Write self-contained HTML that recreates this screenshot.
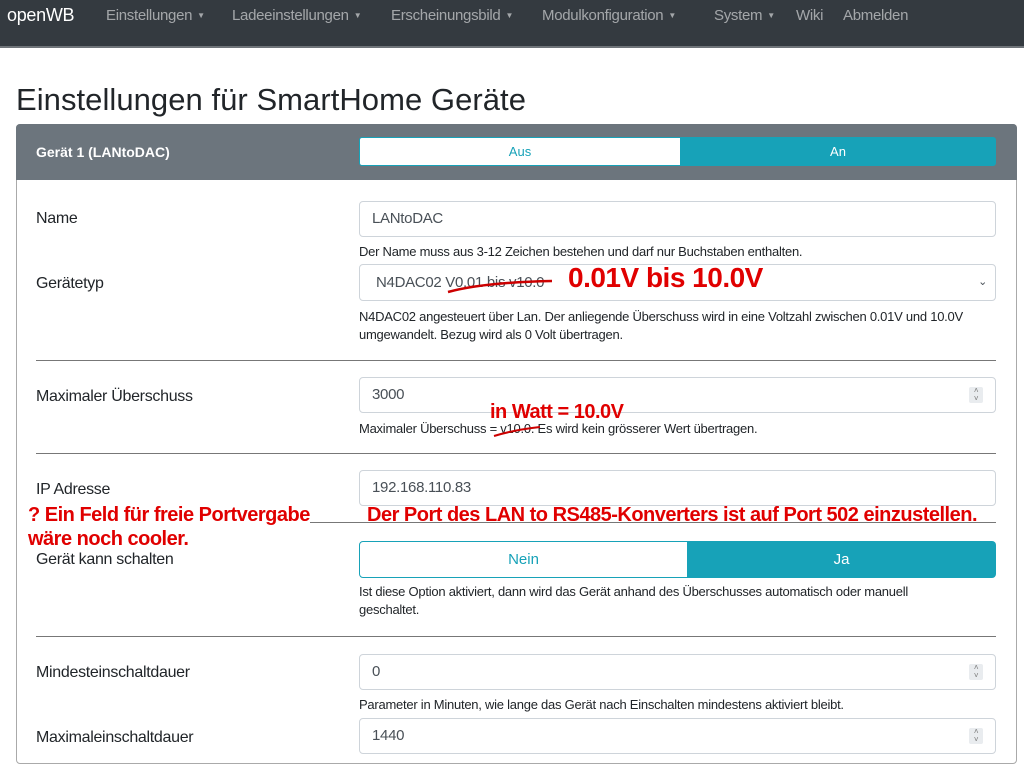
<!DOCTYPE html>
<html><head><meta charset="utf-8"><style>
*{box-sizing:border-box;margin:0;padding:0}
body{width:1024px;height:756px;overflow:hidden;background:#fff;font-family:"Liberation Sans",sans-serif;color:#212529;position:relative}
.a{position:absolute;white-space:nowrap}
.nav{position:absolute;left:0;top:0;width:1024px;height:48px;background:#343a40;border-bottom:2px solid #6f7479}
.nav>span{position:absolute;top:7px;font-size:15px;color:rgba(255,255,255,.55);letter-spacing:-0.3px;white-space:nowrap}
.car{font-size:8px;vertical-align:2px;margin-left:5px}
.inp{position:absolute;left:359px;width:637px;border:1px solid #ced4da;border-radius:4px;background:#fff;font-size:15px;color:#495057;padding-left:12px;letter-spacing:-0.3px}
.lbl{position:absolute;left:36px;font-size:16px;letter-spacing:-0.3px}
.help{position:absolute;left:359px;font-size:13px;color:#212529;letter-spacing:-0.25px;line-height:18px;white-space:nowrap}
.hr{position:absolute;left:36px;width:960px;height:1px;background:#777}
.red{position:absolute;color:#e00000;font-weight:bold;white-space:nowrap;letter-spacing:-0.5px}
.spin{position:absolute;right:12px;top:9px;width:14px;height:16px;background:#e9ecef;border-radius:2px;font-size:8px;color:#777;text-align:center;line-height:8px}
</style></head><body>
<div class="nav">
<span style="left:7px;color:#fff;font-size:18px;top:5px">openWB</span>
<span style="left:106px">Einstellungen<span class="car">▼</span></span>
<span style="left:232px">Ladeeinstellungen<span class="car">▼</span></span>
<span style="left:391px">Erscheinungsbild<span class="car">▼</span></span>
<span style="left:542px">Modulkonfiguration<span class="car">▼</span></span>
<span style="left:714px">System<span class="car">▼</span></span>
<span style="left:796px">Wiki</span>
<span style="left:843px">Abmelden</span>
</div>
<div class="a" style="left:16px;top:82px;font-size:31px;letter-spacing:0.05px">Einstellungen für SmartHome Geräte</div>
<div class="a" style="left:16px;top:124px;width:1001px;height:640px;border:1px solid #aaa;border-radius:4px"></div>
<div class="a" style="left:16px;top:124px;width:1001px;height:56px;background:#6c757d;border-radius:4px 4px 0 0"></div>
<div class="a" style="left:36px;top:144px;color:#fff;font-weight:bold;font-size:14px">Gerät 1 (LANtoDAC)</div>
<div class="a" style="left:359px;top:137px;width:322px;height:29px;background:#fff;border:1px solid #17a2b8;border-radius:3px 0 0 3px;color:#17a2b8;font-size:13px;text-align:center;line-height:27px">Aus</div>
<div class="a" style="left:680px;top:137px;width:316px;height:29px;background:#17a2b8;border-radius:0 3px 3px 0;color:#fff;font-size:13px;text-align:center;line-height:29px">An</div>

<div class="lbl" style="top:210px">Name</div>
<div class="inp" style="top:201px;height:36px;line-height:34px">LANtoDAC</div>
<div class="help" style="top:243px">Der Name muss aus 3-12 Zeichen bestehen und darf nur Buchstaben enthalten.</div>

<div class="lbl" style="top:275px">Gerätetyp</div>
<div class="inp" style="top:264px;height:37px;line-height:35px;padding-left:16px">N4DAC02 V0.01 bis v10.0<span style="position:absolute;right:8px;font-size:11px">⌄</span></div>
<svg class="a" style="left:440px;top:272px" width="120" height="26"><path d="M8 20 C30 14,60 10,112 9" stroke="#c00" stroke-width="2.5" fill="none"/></svg>
<div class="red" style="left:568px;top:262px;font-size:28px">0.01V bis 10.0V</div>
<div class="help" style="top:308px">N4DAC02 angesteuert über Lan. Der anliegende Überschuss wird in eine Voltzahl zwischen 0.01V und 10.0V<br>umgewandelt. Bezug wird als 0 Volt übertragen.</div>
<div class="hr" style="top:360px"></div>

<div class="lbl" style="top:388px">Maximaler Überschuss</div>
<div class="inp" style="top:377px;height:36px;line-height:34px">3000<div class="spin">˄<br>˅</div></div>
<div class="red" style="left:490px;top:401px;font-size:20px">in Watt = 10.0V</div>
<div class="help" style="top:420px">Maximaler Überschuss = v10.0. Es wird kein grösserer Wert übertragen.</div>
<svg class="a" style="left:492px;top:420px" width="50" height="20"><path d="M2 16 C15 12,30 9,48 7" stroke="#c00" stroke-width="2" fill="none"/></svg>
<div class="hr" style="top:453px"></div>

<div class="lbl" style="top:481px">IP Adresse</div>
<div class="inp" style="top:470px;height:36px;line-height:34px">192.168.110.83</div>
<div class="hr" style="top:522px"></div>
<div class="red" style="left:28px;top:503px;font-size:20px;line-height:24px;background:#fff">? Ein Feld für freie Portvergabe<br>wäre noch cooler.</div>
<div class="red" style="left:367px;top:503px;font-size:20px;line-height:24px">Der Port des LAN to RS485-Konverters ist auf Port 502 einzustellen.</div>

<div class="lbl" style="top:551px">Gerät kann schalten</div>
<div class="a" style="left:359px;top:541px;width:329px;height:37px;background:#fff;border:1px solid #17a2b8;border-radius:4px 0 0 4px;color:#17a2b8;font-size:15px;text-align:center;line-height:35px">Nein</div>
<div class="a" style="left:687px;top:541px;width:309px;height:37px;background:#17a2b8;border-radius:0 4px 4px 0;color:#fff;font-size:15px;text-align:center;line-height:37px">Ja</div>
<div class="help" style="top:583px">Ist diese Option aktiviert, dann wird das Gerät anhand des Überschusses automatisch oder manuell<br>geschaltet.</div>
<div class="hr" style="top:636px"></div>

<div class="lbl" style="top:664px">Mindesteinschaltdauer</div>
<div class="inp" style="top:654px;height:36px;line-height:34px">0<div class="spin">˄<br>˅</div></div>
<div class="help" style="top:696px">Parameter in Minuten, wie lange das Gerät nach Einschalten mindestens aktiviert bleibt.</div>

<div class="lbl" style="top:729px">Maximaleinschaltdauer</div>
<div class="inp" style="top:718px;height:36px;line-height:34px">1440<div class="spin">˄<br>˅</div></div>
</body></html>
